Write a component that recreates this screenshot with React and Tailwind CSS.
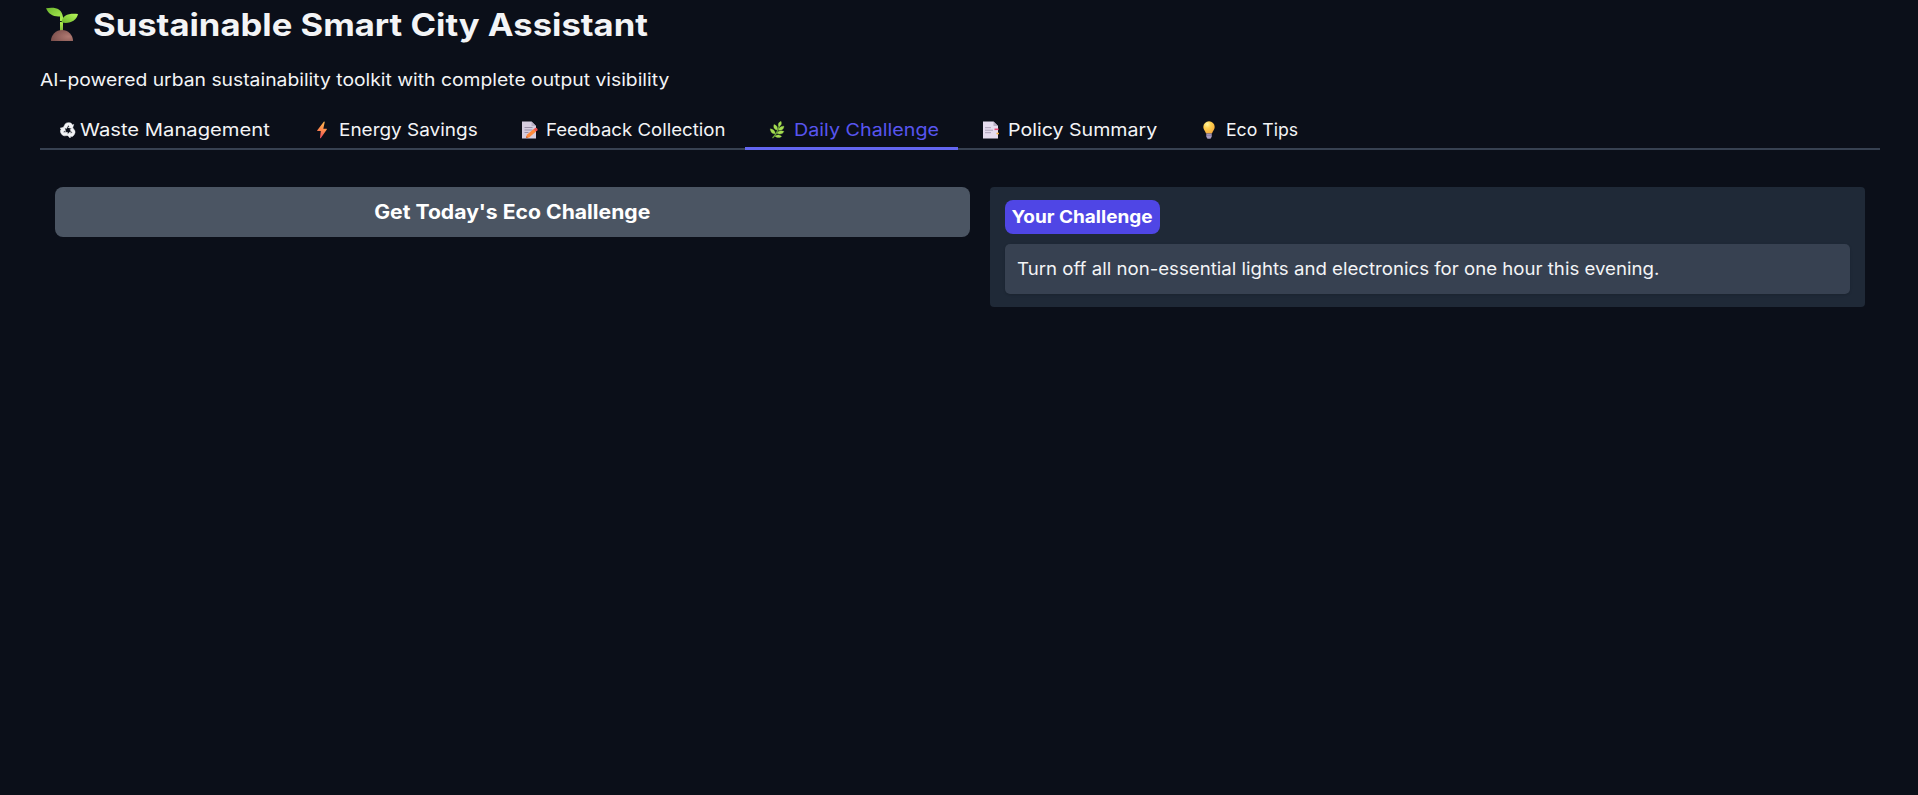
function Sprout() {
  return (
    <svg viewBox="0 0 34 34" className="h-[34px] w-[34px] shrink-0">
      <defs>
        <linearGradient id="leaf" x1="0" y1="0" x2="1" y2="1"><stop offset="0" stopColor="#6cb52d" /><stop offset="1" stopColor="#b2f456" /></linearGradient>
        <linearGradient id="leaf2" x1="1" y1="0" x2="0" y2="1"><stop offset="0" stopColor="#b8f85a" /><stop offset="1" stopColor="#6bb52b" /></linearGradient>
        <linearGradient id="stem" x1="0" y1="0" x2="0" y2="1"><stop offset="0" stopColor="#b2f050" /><stop offset="1" stopColor="#73ad35" /></linearGradient>
        <radialGradient id="soil" cx=".8" cy=".6" r=".9"><stop offset="0" stopColor="#b07a72" /><stop offset="1" stopColor="#784c49" /></radialGradient>
      </defs>
      <path d="M15 15h3v10h-3z" fill="url(#stem)" />
      <path d="M1 1.3C9-.3 17 1 18 10v4h-3V9.5C8 10 3.400 7 1 1.300Z" fill="url(#leaf)" />
      <path d="M33 7C24 6 17 8 16.500 15.500 25 17 31.500 14 33 7Z" fill="url(#leaf2)" />
      <path d="M6 34a11 11 0 0 1 22 0Z" fill="url(#soil)" />
    </svg>
  );
}

function Recycle() {
  return (
    <svg viewBox="0 0 16 16" className="h-4 w-4 shrink-0">
      <g fill="#f3f4f6" stroke="#f3f4f6" strokeWidth=".5" strokeLinejoin="round">
        <path id="arrow" d="M3.600 5.200 5 2.200Q6 .700 8 .700h1.600q1.400 0 2.200 1.300l.6 1 1.300-.6-1.300 4.400-4.300-1.400 1.300-.8L8.300 2.900 6.500 6.600Z" />
        <use href="#arrow" transform="rotate(120 8 8.200)" />
        <use href="#arrow" transform="rotate(240 8 8.200)" />
      </g>
    </svg>
  );
}

function Bolt() {
  return (
    <svg viewBox="0 0 18 18" className="h-[18px] w-[18px] shrink-0">
      <defs><linearGradient id="bolt" x1=".6" y1="0" x2=".4" y2="1"><stop offset="0" stopColor="#ffb84f" /><stop offset=".5" stopColor="#ff8a4c" /><stop offset="1" stopColor="#e8485c" /></linearGradient></defs>
      <path d="M10.800.7 4.300 9.200c-.3.500 0 .9.500.9h3L7 16.700c0 .6.500.8.900.3l5.900-8.400c.3-.5 0-.9-.5-.9h-3l1.400-6.500c.1-.7-.5-1-.9-.5Z" fill="url(#bolt)" />
    </svg>
  );
}

function Memo() {
  return (
    <svg viewBox="0 0 18 18" className="h-[18px] w-[18px] shrink-0">
      <path d="M1 .500h9.500L15 5v12.500H1Z" fill="#d6cddf" />
      <path d="M10.500.500V5H15Z" fill="#b8aec4" />
      <path d="M3.500 6.500h8M3.500 9h8M3.500 11.500h4" stroke="#9a90a8" strokeWidth="1" />
      <path d="m5 17 .8-3.200 7-5.800 2.300 2.500-7 6Z" fill="#ff8b3d" />
      <path d="m12.600 8.200 1.700-1.300c1.200-.6 3 1.300 2.100 2.300l-1.500 1.400Z" fill="#f4504f" />
      <path d="m5 17 .5-2 1.500 1.700Z" fill="#c65a35" />
    </svg>
  );
}

function Herb() {
  return (
    <svg viewBox="0 0 18 18" className="h-[18px] w-[18px] shrink-0">
      <path d="M3.500 17C7 14 9 10 10.500 4" stroke="#6ba836" strokeWidth="1.200" fill="none" />
      <g fill="#a4dc50" stroke="#a4dc50" strokeWidth=".3">
        <path d="M10 5.500C8.500 3.500 9.500 1.300 12 .3c1 2.200.3 4.400-2 5.200Z" />
        <path d="M8.300 9C5.200 8.600 4.200 6.500 5 3.500c2.700.6 4 2.700 3.300 5.500Z" />
        <path d="M6.300 12.800C3 13 1.500 11 1.200 7.800c3 .2 5 2 5.100 5Z" />
        <path d="M9.600 9.200c.3-3 2.600-4.300 5.400-4-.2 3-2.300 4.500-5.400 4Z" />
        <path d="M8 12.300c1.500-2.600 4.500-3 7-1.800-1.500 2.600-4.300 3.200-7 1.800Z" />
        <path d="M6 15.200c2-1.900 4.800-1.600 6.600.2-2.200 1.700-4.800 1.500-6.600-.2Z" />
      </g>
    </svg>
  );
}

function Bookmarks() {
  return (
    <svg viewBox="0 0 18 18" className="h-[18px] w-[18px] shrink-0">
      <path d="M1 .500h10.500L16 5v12.500H1Z" fill="#e6ddef" />
      <path d="M11.500.500V5H16Z" fill="#b8aec4" />
      <path d="M3 6.700h6M3 9.200h8M3 11.700h6" stroke="#ada3ba" strokeWidth="1" />
      <path d="M12.500 7.500h4v1.600h-4z" fill="#ec4b78" />
      <path d="M14.500 11.700h2.500v1.600h-2.500z" fill="#f3ad3c" />
    </svg>
  );
}

function Bulb() {
  return (
    <svg viewBox="0 0 18 18" className="h-[18px] w-[18px] shrink-0">
      <defs><radialGradient id="bulb" cx=".35" cy=".25" r=".8"><stop offset="0" stopColor="#fff6a0" /><stop offset=".4" stopColor="#ffd04f" /><stop offset="1" stopColor="#f3a83b" /></radialGradient></defs>
      <path d="M9 .300A5.700 5.700 0 0 0 3.300 6c0 2.800 2 4 2.700 6.500h6c.7-2.500 2.700-3.700 2.700-6.500A5.700 5.700 0 0 0 9 .300Z" fill="url(#bulb)" />
      <path d="M6.300 12.500h5.400v3.300L10.500 17.700h-3l-1.200-1.900Z" fill="#a99bbd" />
      <path d="M6.300 14.300h5.400" stroke="#7d6f92" strokeWidth=".7" />
    </svg>
  );
}

const tabs = [
  { label: "Waste Management", Icon: Recycle, box: "w-[250px] pl-[20px] gap-[4px]", stretch: "scale-x-[1.155]" },
  { label: "Energy Savings", Icon: Bolt, box: "w-[207px] pl-[23px] gap-[8px]", stretch: "scale-x-[1.083]" },
  { label: "Feedback Collection", Icon: Memo, box: "w-[248px] pl-[24px] gap-[7px]", stretch: "scale-x-[1.063]" },
  { label: "Daily Challenge", Icon: Herb, box: "w-[213px] pl-[24px] gap-[7px]", stretch: "scale-x-[1.127]", active: true },
  { label: "Policy Summary", Icon: Bookmarks, box: "w-[218px] pl-[24px] gap-[8px]", stretch: "scale-x-[1.120]" },
  { label: "Eco Tips", Icon: Bulb, box: "w-[142px] pl-[24px] gap-[8px]", stretch: "scale-x-[1.010]" },
];

export default function App() {
  return (
    <main className="min-h-screen bg-[#0b0f19] px-10 font-['Inter',sans-serif] text-gray-100">
      <header>
        <h1 className="flex h-[50px] items-start gap-[14px] pl-[5px] pt-[7px] text-[31px] font-bold leading-[34px]">
          <Sprout />
          <span className="origin-left pt-px scale-x-[1.116]">Sustainable Smart City Assistant</span>
        </h1>
        <p className="h-[62px] pt-[18px] text-[17.500px] leading-6">
          <span className="inline-block origin-left scale-x-[1.104]">AI-powered urban sustainability toolkit with complete output visibility</span>
        </p>
      </header>
      <nav className="-mr-[2px] flex h-[38px] border-b-2 border-[#374151]">
        {tabs.map(({ label, Icon, box, stretch, active }) => (
          <button key={label} className={`-mb-[2px] flex h-[38px] items-start pt-[6px] text-[17.500px] leading-[24px] ${box} ${active ? "border-b-3 border-[#6366f1] text-[#5855ef]" : ""}`}>
            <span className="flex h-6 items-center"><Icon /></span>
            <span className={`origin-left whitespace-nowrap ${stretch}`}>{label}</span>
          </button>
        ))}
      </nav>
      <section className="flex items-start gap-5 pl-[15px] pr-[13px] pt-[37px]">
        <button className="h-[50px] w-[915px] rounded-lg bg-[#4b5563] pt-[2px] text-[19.500px] font-bold text-white">
          <span className="inline-block scale-x-[1.085]">Get Today's Eco Challenge</span>
        </button>
        <div className="flex h-[120px] w-[875px] flex-col items-start gap-[10px] rounded bg-[#1f2937] px-[15px] pt-[13px]">
          <span className="flex h-[34px] w-[155px] items-center justify-center rounded-lg bg-[#4f46e5] text-[17.500px] font-bold text-white">
            <span className="scale-x-[1.084]">Your Challenge</span>
          </span>
          <p className="flex h-[50px] w-full items-center rounded-[5px] bg-[#374151] pl-[12px] text-[17.500px] shadow-sm">
            <span className="origin-left scale-x-[1.065]">Turn off all non-essential lights and electronics for one hour this evening.</span>
          </p>
        </div>
      </section>
    </main>
  );
}
